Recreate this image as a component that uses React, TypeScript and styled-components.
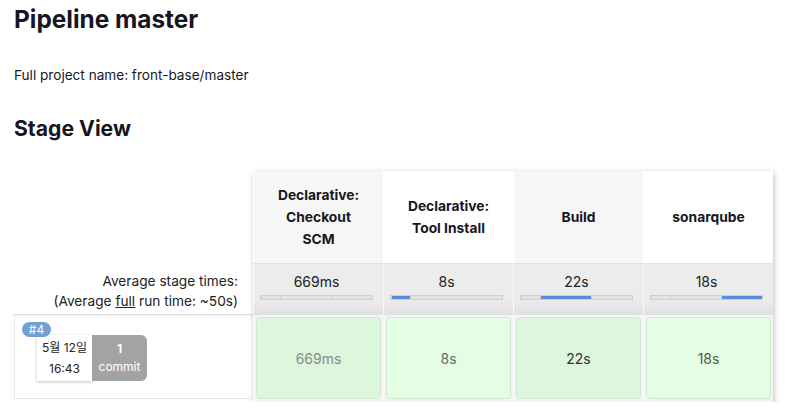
import styled, { createGlobalStyle } from "styled-components";

const GlobalStyle = createGlobalStyle`
  body {
    margin: 0;
    background: #fff;
    font-family: Inter, "Noto Sans CJK KR", sans-serif;
    color: #16161f;
  }
`;

const Page = styled.div`
  padding: 0 14px;
`;

const Title = styled.h1`
  margin: 0;
  padding-top: 4px;
  font-size: 24.4px;
  line-height: 30px;
  font-weight: 700;
`;

const ProjectName = styled.p`
  margin: 31px 0 0;
  font-size: 13.6px;
  line-height: 20px;
`;

const SectionTitle = styled.h2`
  margin: 29px 0 0;
  font-size: 21.2px;
  line-height: 28px;
  font-weight: 700;
`;

const StageView = styled.div`
  margin-top: 29px;
  display: flex;
`;

const LeftColumn = styled.div`
  width: 239px;
  display: grid;
  grid-template-rows: 92px 52px 87px;
`;

const AverageLabel = styled.div`
  padding: 8px 15px 0 0;
  text-align: right;
  font-size: 13.7px;
  line-height: 20px;
  color: #222;
  border-bottom: 1px solid #ddd;
  box-shadow: 0 1px 1px rgba(0, 0, 0, 0.04);

  u {
    text-decoration: underline;
  }
`;

const BuildRowLabel = styled.div`
  position: relative;
  border-left: 1px solid #e8e8e8;
  border-bottom: 1px solid #e8e8e8;
  margin-bottom: 3px;
  padding: 20px 0 0 22px;
  display: flex;
  align-items: flex-start;
`;

const BuildBadge = styled.span`
  position: absolute;
  left: 7px;
  top: 7px;
  width: 29px;
  height: 15px;
  border-radius: 8px;
  background: #729fd4;
  color: #fff;
  font-size: 12px;
  line-height: 15px;
  text-align: center;
  z-index: 1;
`;

const DateBox = styled.div`
  width: 55px;
  height: 46px;
  background: #fff;
  box-shadow: 0 1px 3px rgba(0, 0, 0, 0.25);
  display: flex;
  flex-direction: column;
  align-items: center;
  justify-content: space-between;
  font-size: 12px;
  line-height: 16px;
  color: #222;
  padding: 5px 0 4px;
  box-sizing: border-box;
`;

const CommitBox = styled.div`
  width: 55px;
  height: 46px;
  background: #a3a3a3;
  border-radius: 0 6px 6px 0;
  color: #fff;
  display: flex;
  flex-direction: column;
  align-items: center;
  justify-content: center;
  font-size: 12px;
  line-height: 18px;

  b {
    font-weight: 700;
  }
`;

const StageTable = styled.div`
  display: grid;
  grid-template-columns: repeat(4, 130px);
  grid-template-rows: 92px 52px 87px;
  box-shadow: 1px 2px 6px rgba(0, 0, 0, 0.25);
  background: #f4f4f4;
`;

const StageHeader = styled.div<{ $shaded: boolean }>`
  background: ${(p) => (p.$shaded ? "#f6f6f6" : "#ffffff")};
  border-left: 1px solid #fff;
  display: flex;
  align-items: center;
  justify-content: center;
  text-align: center;
  font-size: 13.8px;
  line-height: 22px;
  font-weight: 700;
  padding: 0 12px;
`;

const AverageCell = styled.div`
  background: linear-gradient(#ececec 0%, #ececec 70%, #e0e0e0 100%);
  border-left: 1px solid #f8f8f8;
  border-top: 1px solid #e2e2e2;
  padding: 8px 0 0 6px;
  box-sizing: border-box;
`;

const AverageTime = styled.div`
  width: 113px;
  text-align: center;
  font-size: 14px;
  line-height: 20px;
  color: #222;
`;

const Bar = styled.div`
  margin-top: 3px;
  width: 113px;
  height: 5px;
  box-sizing: border-box;
  border: 1px solid #cfcfcf;
  background: #e3e3e3;
  display: flex;
`;

const BarSegment = styled.div<{ $active: boolean }>`
  height: 100%;
  background: ${(p) => (p.$active ? "#5a8bd6" : "transparent")};
  border-right: 1px solid #d2d2d2;
  box-sizing: border-box;

  &:last-child {
    border-right: none;
  }
`;

const ResultCell = styled.div`
  padding: 2px 2px 3px;
  border-left: 1px solid #f8f8f8;
`;

const ResultBox = styled.div<{ $shaded: boolean; $ink: string }>`
  height: 100%;
  box-sizing: border-box;
  border: 1px solid #d3e6d3;
  border-radius: 4px;
  background: ${(p) => (p.$shaded ? "#dcf7dc" : "#e3fee3")};
  color: ${(p) => p.$ink};
  display: flex;
  align-items: center;
  justify-content: center;
  font-size: 14px;
`;

const stages = [
  { name: "Declarative: Checkout SCM", avg: "669ms", run: "669ms", ink: "#8a8a8a" },
  { name: "Declarative: Tool Install", avg: "8s", run: "8s", ink: "#6a6a6a" },
  { name: "Build", avg: "22s", run: "22s", ink: "#333" },
  { name: "sonarqube", avg: "18s", run: "18s", ink: "#555" },
];

const headerLines = [
  ["Declarative:", "Checkout", "SCM"],
  ["Declarative:", "Tool Install"],
  ["Build"],
  ["sonarqube"],
];

// boundaries of each stage across the full run, in percent
const marks = [0, 1, 18, 64, 100];

const ProgressBar = ({ active }: { active: number }) => (
  <Bar>
    {marks.slice(1).map((end, i) => (
      <BarSegment
        key={i}
        $active={i === active}
        style={{ width: `${end - marks[i]}%` }}
      />
    ))}
  </Bar>
);

export default function App() {
  return (
    <Page>
      <GlobalStyle />
      <Title>Pipeline master</Title>
      <ProjectName>Full project name: front-base/master</ProjectName>
      <SectionTitle>Stage View</SectionTitle>
      <StageView>
        <LeftColumn>
          <div />
          <AverageLabel>
            Average stage times:
            <br />
            (Average <u>full</u> run time: ~50s)
          </AverageLabel>
          <BuildRowLabel>
            <BuildBadge>#4</BuildBadge>
            <DateBox>
              <span>5월 12일</span>
              <span>16:43</span>
            </DateBox>
            <CommitBox>
              <b>1</b>
              <span>commit</span>
            </CommitBox>
          </BuildRowLabel>
        </LeftColumn>
        <StageTable>
          {stages.map((s, i) => (
            <StageHeader key={s.name} $shaded={i % 2 === 0}>
              <div>
                {headerLines[i].map((l) => (
                  <div key={l}>{l}</div>
                ))}
              </div>
            </StageHeader>
          ))}
          {stages.map((s, i) => (
            <AverageCell key={s.name}>
              <AverageTime>{s.avg}</AverageTime>
              <ProgressBar active={i} />
            </AverageCell>
          ))}
          {stages.map((s, i) => (
            <ResultCell key={s.name}>
              <ResultBox $shaded={i % 2 === 0} $ink={s.ink}>
                {s.run}
              </ResultBox>
            </ResultCell>
          ))}
        </StageTable>
      </StageView>
    </Page>
  );
}
